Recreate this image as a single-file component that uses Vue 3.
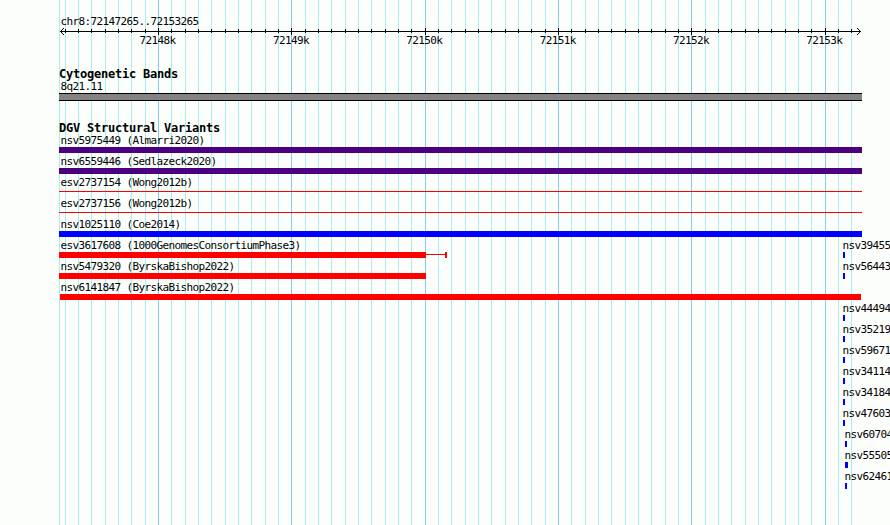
<script setup>
const step = 40 / 3
const gridLines = []
for (let k = -7; k <= 52; k++) {
  gridLines.push({ x: Math.round(158 + k * step), major: k % 10 === 0 })
}
const majors = gridLines.filter((l) => l.major)

const indigo = '#4b0082'
const red = '#ff0000'
const blue = '#0000ff'

const rows = [
  { name: 'nsv5975449 (Almarri2020)', start: 59, end: 862, color: indigo },
  { name: 'nsv6559446 (Sedlazeck2020)', start: 59, end: 862, color: indigo },
  { name: 'esv2737154 (Wong2012b)', start: 59, end: 862, color: red, thin: true },
  { name: 'esv2737156 (Wong2012b)', start: 59, end: 862, color: red, thin: true },
  { name: 'nsv1025110 (Coe2014)', start: 59, end: 862, color: blue },
  { name: 'esv3617608 (1000GenomesConsortiumPhase3)', start: 59, end: 426, color: red, whisker: true, side: { name: 'nsv39455', x: 843, w: 2 } },
  { name: 'nsv5479320 (ByrskaBishop2022)', start: 59, end: 426, color: red, side: { name: 'nsv56443', x: 843, w: 2 } },
  { name: 'nsv6141847 (ByrskaBishop2022)', start: 60, end: 861, color: red },
  { side: { name: 'nsv44494', x: 843, w: 2 } },
  { side: { name: 'nsv35219', x: 843, w: 2 } },
  { side: { name: 'nsv59671', x: 843, w: 2 } },
  { side: { name: 'nsv34114', x: 843, w: 2 } },
  { side: { name: 'nsv34184', x: 843, w: 2 } },
  { side: { name: 'nsv47603', x: 843, w: 2 } },
  { side: { name: 'nsv60704', x: 845, w: 2 } },
  { side: { name: 'nsv55505', x: 845, w: 3 } },
  { side: { name: 'nsv62461', x: 845, w: 2 } },
]
</script>

<template>
  <main class="browser">
    <svg class="grid" width="890" height="525" shape-rendering="crispEdges">
      <rect x="59" y="0" width="1" height="525" class="minor" />
      <rect v-for="l in gridLines" :key="l.x" :x="l.x" y="0" width="1" height="525" :class="l.major ? 'major' : 'minor'" />
    </svg>

    <section class="tracks">
      <header class="region label">chr8:72147265..72153265</header>
      <svg class="axis" width="890" height="8" shape-rendering="crispEdges">
        <rect x="60" y="3" width="801" height="1" />
        <rect v-for="l in gridLines" :key="l.x" :x="l.x" :y="l.major ? 0 : 1" width="1" :height="l.major ? 7 : 4" />
        <g v-for="i in 3" :key="i">
          <rect :x="60 + i" :y="3 - i" width="1" height="1" />
          <rect :x="60 + i" :y="3 + i" width="1" height="1" />
          <rect :x="860 - i" :y="3 - i" width="1" height="1" />
          <rect :x="860 - i" :y="3 + i" width="1" height="1" />
        </g>
      </svg>
      <div class="ticks">
        <span v-for="(l, i) in majors" :key="l.x" class="label tick">{{ 72148 + i }}k</span>
      </div>

      <h2 class="title cyto">Cytogenetic Bands</h2>
      <div class="label band-name">8q21.11</div>
      <div class="band"></div>

      <h2 class="title variants">DGV Structural Variants</h2>
      <div v-for="(r, i) in rows" :key="i" class="row">
        <div v-if="r.name" class="feature">
          <div class="label name">{{ r.name }}</div>
          <div class="glyph" :style="{ marginLeft: r.start + 'px' }">
            <i class="bar" :class="{ thin: r.thin }" :style="{ width: r.end - r.start + 'px', background: r.color }"></i>
            <template v-if="r.whisker"><i class="whisker"></i><i class="cap"></i></template>
          </div>
        </div>
        <div v-if="r.side" class="side" :style="{ marginLeft: r.side.x - 1 + 'px' }">
          <div class="label side-name">{{ r.side.name }}</div>
          <i class="mark" :style="{ width: r.side.w + 'px' }"></i>
        </div>
      </div>
    </section>
  </main>
</template>

<style>
body {
  background: #fcfefc;
  overflow: hidden;
}
</style>

<style scoped>
.browser {
  position: relative;
  width: 890px;
  height: 525px;
  overflow: hidden;
  background: #fcfefc;
  color: #000;
}
.grid {
  position: absolute;
  inset: 0;
}
.minor { fill: #aceeec; }
.major { fill: #84caec; }
.tracks {
  position: relative;
  display: flex;
  flex-direction: column;
  padding-top: 16px;
}
.label {
  font: 11px/12px "DejaVu Sans Mono", monospace;
  letter-spacing: -0.622px;
  white-space: pre;
  height: 12px;
}
.region { padding-left: 60.4px; }
.axis { display: block; }
.ticks {
  display: flex;
  padding-left: 139.6px;
  height: 13px;
  margin-top: -1px;
}
.tick { width: 133.35px; flex: none; }
.title {
  margin: 0;
  padding-left: 59px;
  height: 13px;
  font: bold 12px/13px "DejaVu Sans Mono", monospace;
  letter-spacing: -0.224px;
  white-space: pre;
}
.cyto { margin-top: 20px; }
.band-name { padding-left: 60.4px; }
.band {
  box-sizing: border-box;
  width: 803px;
  height: 8px;
  margin-left: 59px;
  border: solid #000;
  border-width: 1px 0;
  background: #848284;
}
.variants { margin-top: 21px; }
.row {
  display: grid;
  height: 21px;
}
.feature, .side { grid-area: 1 / 1; }
.name { padding-left: 60.4px; }
.side-name { padding-left: 0.4px; }
.glyph {
  display: flex;
  height: 6px;
}
.bar { display: block; height: 6px; }
.bar.thin { height: 1px; margin-top: 2px; }
.whisker { width: 19px; height: 1px; margin-top: 2px; background: #f00; }
.cap { width: 2px; height: 6px; background: #f00; }
.mark { display: block; height: 6px; margin-left: 1px; background: #00f; }
</style>
